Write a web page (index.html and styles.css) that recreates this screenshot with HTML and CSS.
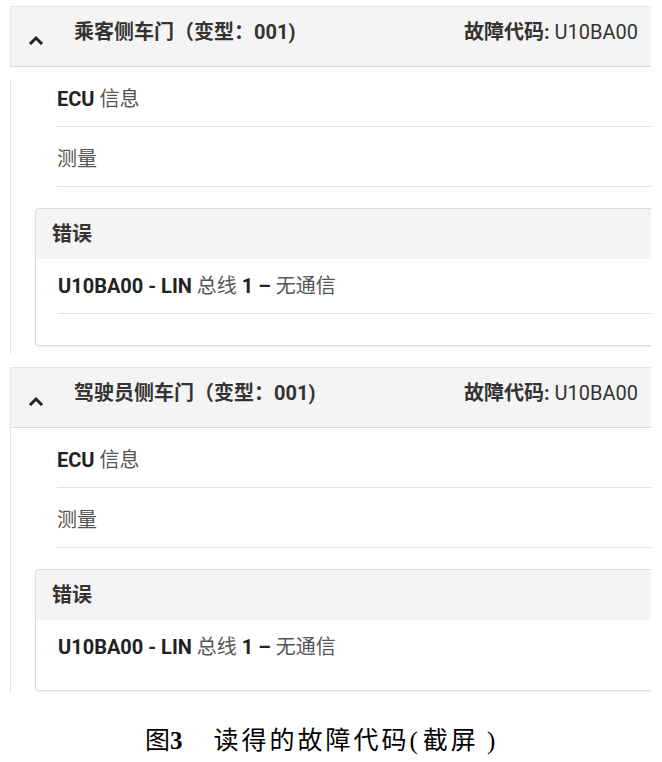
FILE: index.html
```html
<!DOCTYPE html>
<html>
<head>
    <title>故障代码</title>
    <meta charset="utf-8">
    <link rel="stylesheet" href="styles.css">
</head>
<body>
    <div class="page">
        <section class="module module-first">
            <header class="module-head">
                <svg class="chevron" width="16" height="10" viewBox="0 0 16 10"><polyline points="2,9 8,3 14,9" fill="none" stroke="#222" stroke-width="3"/></svg>
                <h2 class="module-title">乘客侧车门（变型：001)</h2>
                <div class="module-code"><b>故障代码:</b> U10BA00</div>
            </header>
            <div class="module-body">
                <div class="entry"><b>ECU</b> 信息</div>
                <div class="entry">测量</div>
                <div class="errors">
                    <div class="errors-head">错误</div>
                    <div class="errors-body">
                        <div class="error-item"><b>U10BA00 - LIN</b> 总线 <b>1 –</b> 无通信</div>
                    </div>
                </div>
            </div>
        </section>

        <section class="module module-last">
            <header class="module-head">
                <svg class="chevron" width="16" height="10" viewBox="0 0 16 10"><polyline points="2,9 8,3 14,9" fill="none" stroke="#222" stroke-width="3"/></svg>
                <h2 class="module-title">驾驶员侧车门（变型：001)</h2>
                <div class="module-code"><b>故障代码:</b> U10BA00</div>
            </header>
            <div class="module-body">
                <div class="entry"><b>ECU</b> 信息</div>
                <div class="entry">测量</div>
                <div class="errors">
                    <div class="errors-head">错误</div>
                    <div class="errors-body">
                        <div class="error-item error-item-plain"><b>U10BA00 - LIN</b> 总线 <b>1 –</b> 无通信</div>
                    </div>
                </div>
            </div>
        </section>
    </div>

    <p class="caption"><span class="fig-no">图<b>3</b></span>读得的故障代码<span class="paren-open">(</span>截屏<span class="paren">)</span></p>
</body>
</html>
```

FILE: styles.css
```css
body {
    margin: 0;
    background: #fff;
    font-family: Roboto, "Noto Sans CJK SC", sans-serif;
    color: #333;
}
.page {
    width: 641px;
    margin-left: 10px;
    padding-top: 6px;
    overflow: hidden;
}
.module {
    margin-bottom: 13px;
}
.module-last {
    margin-bottom: 0;
}
.module-head {
    display: flex;
    align-items: flex-start;
    height: 59px;
    padding: 0 13px 0 17px;
    background: #f4f4f4;
    border: 1px solid #e6e6e6;
    border-right: none;
    border-bottom-color: #d9d9d9;
}
.chevron {
    margin-top: 28px;
    flex-shrink: 0;
}
.module-title {
    margin: 0 0 0 30px;
    padding-top: 13px;
    font-size: 20px;
    line-height: 24px;
    font-weight: 700;
    color: #333;
}
.module-code {
    margin-left: auto;
    padding-top: 13px;
    font-size: 20px;
    line-height: 24px;
    color: #333;
}
.module-code b {
    font-weight: 700;
}
.module-body {
    border-left: 1px solid #e4e4e4;
    padding: 0 0 8px 24px;
}
/* the first panel's left rule starts a little below the header */
.module-first .module-body {
    border-left: none;
    padding-left: 25px;
    background: linear-gradient(#e4e4e4, #e4e4e4) no-repeat 0 13px / 1px 100%;
}
.module-last .module-body {
    padding-bottom: 2px;
}
.entry {
    margin-left: 22px;
    padding: 20px 0 15px;
    font-size: 20px;
    line-height: 24px;
    color: #555;
    border-bottom: 1px solid #e0e0e0;
}
.entry b {
    color: #222;
}
.errors {
    margin-top: 21px;
    border: 1px solid #dcdcdc;
    border-right: none;
    border-radius: 4px 0 0 4px;
    box-shadow: 0 1px 2px rgba(0, 0, 0, 0.08);
    overflow: hidden;
}
.errors-head {
    padding: 13px 16px;
    background: #f4f4f4;
    font-size: 20px;
    line-height: 24px;
    font-weight: 700;
    color: #333;
}
.errors-body {
    padding: 0 0 31px 22px;
}
.error-item {
    padding: 15px 0;
    font-size: 20px;
    line-height: 24px;
    color: #555;
    border-bottom: 1px solid #e0e0e0;
}
.error-item b {
    color: #222;
}
.error-item-plain {
    border-bottom: none;
    padding-bottom: 0;
}
.caption {
    margin: 33px 0 0 145px;
    font-family: "Liberation Serif", "Noto Sans CJK SC", serif;
    font-size: 25px;
    line-height: 30px;
    letter-spacing: 3px;
    color: #000;
}
.fig-no {
    letter-spacing: 0;
    margin-right: 31px;
}
.paren-open {
    margin-right: 2px;
}
.paren {
    margin-left: 8px;
}
```
